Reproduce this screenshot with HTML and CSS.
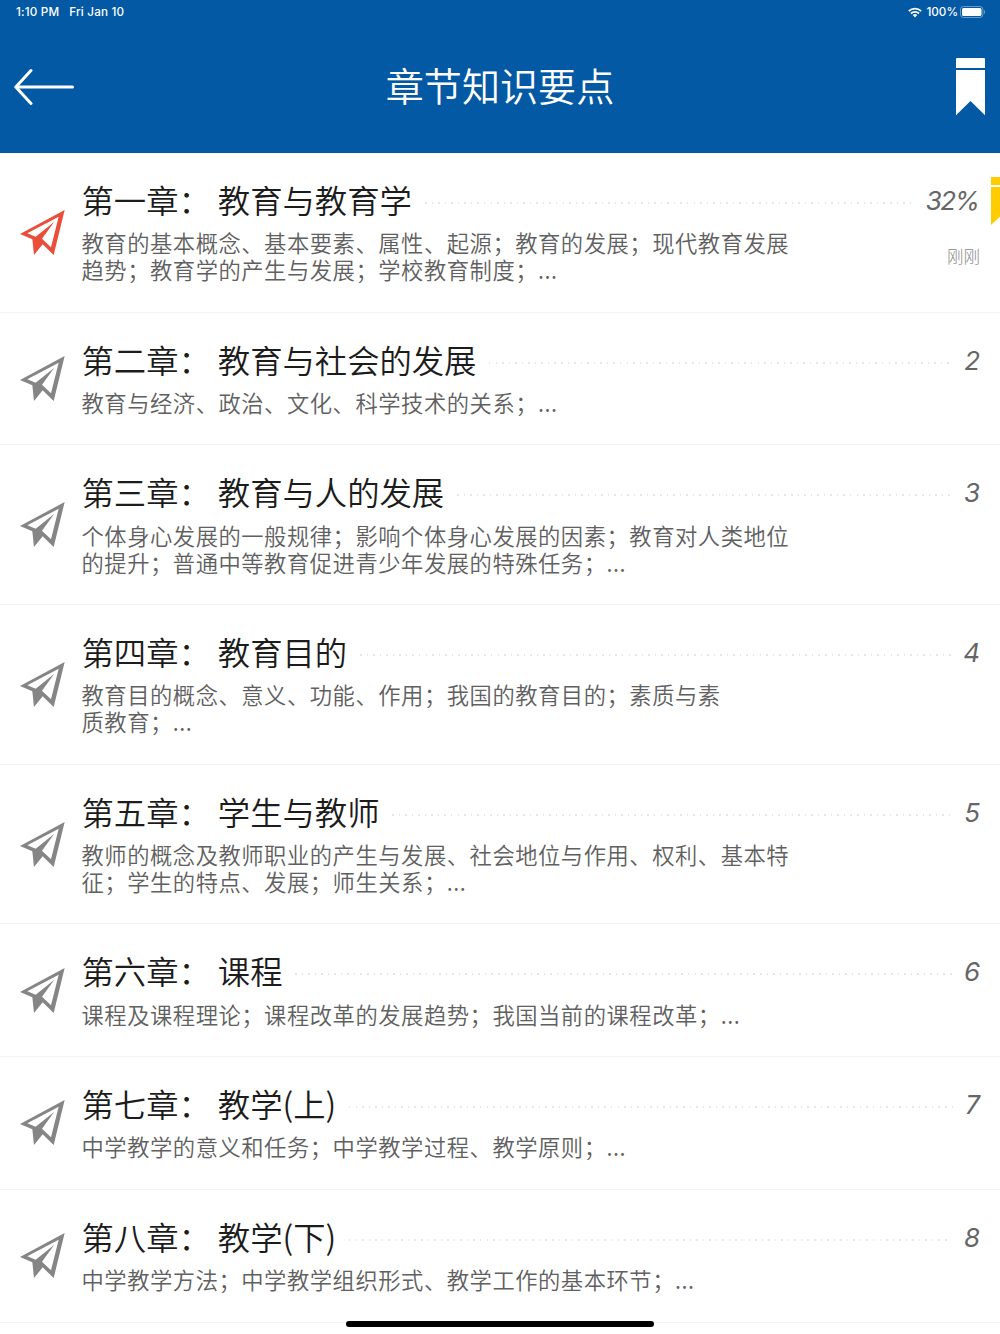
FILE: index.html
```html
<!DOCTYPE html>
<html lang="zh-CN">
<head>
  <meta charset="UTF-8">
  <title>章节知识要点</title>
  <link rel="stylesheet" href="styles.css">
</head>
<body>
  <svg class="defs" width="0" height="0">
    <symbol id="plane" viewBox="0 0 135 135">
      <path fill-rule="evenodd" d="M134 0 L101 135 L68 103 L42 135 L37 88 L0 72 Z M116 20 L22 70 L47 80 L103 35 L66 86 L93 112 Z"/>
    </symbol>
  </svg>

  <header class="header">
    <div class="status">
      <span class="time">1:10 PM</span>
      <span class="date">Fri Jan 10</span>
      <svg class="wifi" width="14" height="11" viewBox="0 0 14 11">
        <g fill="none" stroke="#fff" stroke-width="1.8">
          <path d="M0.8 4.1 A8.8 8.8 0 0 1 13.2 4.1"/>
          <path d="M3 6.5 A5.7 5.7 0 0 1 11 6.5"/>
        </g>
        <path fill="#fff" d="M4.7 8 A3.3 3.3 0 0 1 9.3 8 L7 10.4 Z"/>
      </svg>
      <span class="percent">100%</span>
      <svg class="battery" width="25" height="12" viewBox="0 0 25 12">
        <rect x="0.5" y="0.5" width="22.4" height="11" rx="3" fill="none" stroke="#fff" stroke-opacity="0.4"/>
        <rect x="2" y="2" width="19.5" height="8" rx="1.6" fill="#fff"/>
        <path d="M24 4 a2.2 2.2 0 0 1 0 4 Z" fill="#fff" fill-opacity="0.4"/>
      </svg>
    </div>
    <div class="navbar">
      <svg class="back" width="60" height="38" viewBox="0 0 60 38">
        <path d="M17 2.5 L1.8 19 L17 35.5 M1.8 19 H58.5" fill="none" stroke="#fff" stroke-width="3" stroke-linecap="round" stroke-linejoin="round"/>
      </svg>
      <h1 class="title">章节知识要点</h1>
      <svg class="bookmark" width="29" height="58" viewBox="0 0 29 58">
        <path fill="#fff" d="M0 1 Q0 0 1 0 H28 Q29 0 29 1 V10 H0 Z M0 12 H29 V57.2 L14.5 43 L0 57.2 Z"/>
      </svg>
    </div>
  </header>

  <main class="chapters">
    <section class="chapter current">
      <svg class="plane"><use href="#plane"/></svg>
      <div class="info">
        <div class="heading"><h2 class="name"><span class="no">第一章：</span>教育与教育学</h2><i class="dots"></i><span class="num">32%</span></div>
        <p class="desc">教育的基本概念、基本要素、属性、起源；教育的发展；现代教育发展<br>趋势；教育学的产生与发展；学校教育制度；...</p>
      </div>
      <span class="ago">刚刚</span>
      <svg class="mark" width="9" height="48" viewBox="0 0 9 48">
        <path fill="#fc0" d="M0 0 H9 V8 H0 Z M0 10 H9 V39.5 L0 48 Z"/>
      </svg>
    </section>
    <section class="chapter">
      <svg class="plane"><use href="#plane"/></svg>
      <div class="info">
        <div class="heading"><h2 class="name"><span class="no">第二章：</span>教育与社会的发展</h2><i class="dots"></i><span class="num">2</span></div>
        <p class="desc">教育与经济、政治、文化、科学技术的关系；...</p>
      </div>
    </section>
    <section class="chapter">
      <svg class="plane"><use href="#plane"/></svg>
      <div class="info">
        <div class="heading"><h2 class="name"><span class="no">第三章：</span>教育与人的发展</h2><i class="dots"></i><span class="num">3</span></div>
        <p class="desc">个体身心发展的一般规律；影响个体身心发展的因素；教育对人类地位<br>的提升；普通中等教育促进青少年发展的特殊任务；...</p>
      </div>
    </section>
    <section class="chapter">
      <svg class="plane"><use href="#plane"/></svg>
      <div class="info">
        <div class="heading"><h2 class="name"><span class="no">第四章：</span>教育目的</h2><i class="dots"></i><span class="num">4</span></div>
        <p class="desc">教育目的概念、意义、功能、作用；我国的教育目的；素质与素<br>质教育；...</p>
      </div>
    </section>
    <section class="chapter">
      <svg class="plane"><use href="#plane"/></svg>
      <div class="info">
        <div class="heading"><h2 class="name"><span class="no">第五章：</span>学生与教师</h2><i class="dots"></i><span class="num">5</span></div>
        <p class="desc">教师的概念及教师职业的产生与发展、社会地位与作用、权利、基本特<br>征；学生的特点、发展；师生关系；...</p>
      </div>
    </section>
    <section class="chapter">
      <svg class="plane"><use href="#plane"/></svg>
      <div class="info">
        <div class="heading"><h2 class="name"><span class="no">第六章：</span>课程</h2><i class="dots"></i><span class="num">6</span></div>
        <p class="desc">课程及课程理论；课程改革的发展趋势；我国当前的课程改革；...</p>
      </div>
    </section>
    <section class="chapter">
      <svg class="plane"><use href="#plane"/></svg>
      <div class="info">
        <div class="heading"><h2 class="name"><span class="no">第七章：</span>教学(上)</h2><i class="dots"></i><span class="num">7</span></div>
        <p class="desc">中学教学的意义和任务；中学教学过程、教学原则；...</p>
      </div>
    </section>
    <section class="chapter">
      <svg class="plane"><use href="#plane"/></svg>
      <div class="info">
        <div class="heading"><h2 class="name"><span class="no">第八章：</span>教学(下)</h2><i class="dots"></i><span class="num">8</span></div>
        <p class="desc">中学教学方法；中学教学组织形式、教学工作的基本环节；...</p>
      </div>
    </section>
  </main>

  <div class="home-bar"></div>
</body>
</html>
```
FILE: styles.css
```css
* {
  box-sizing: border-box;
}
body {
  margin: 0;
  height: 1334px;
  overflow: hidden;
  background: #fff;
  font-family: Inter, "Noto Sans CJK SC", sans-serif;
}
h1, h2, p {
  margin: 0;
  font-weight: 350;
}
.defs {
  position: absolute;
}

/* header */
.header {
  height: 153px;
  background: #0359a3;
  color: #fff;
}
.status {
  display: flex;
  align-items: center;
  height: 24px;
  padding: 0 15px 0 16px;
  font-size: 11.7px;
  font-weight: 500;
}
.time, .date {
  letter-spacing: 0.17px;
}
.date {
  margin-left: 10px;
}
.wifi {
  margin-left: auto;
}
.percent {
  margin: 0 2px 0 4px;
}
.navbar {
  display: flex;
  align-items: center;
  justify-content: space-between;
  height: 125.4px;
  padding: 0 15px 0 14px;
}
.title {
  margin: -4px 0 0 -30px;
  font-family: "Noto Sans CJK SC", sans-serif;
  font-size: 38.1px;
}

/* chapter list */
.chapter {
  position: relative;
  display: flex;
  align-items: center;
  padding: 27.5px 20px 28.5px;
  border-bottom: 1px solid #f3f3f3;
}
.plane {
  flex: none;
  width: 45px;
  height: 45px;
  margin: 1px 16.5px 0 0;
  fill: #858585;
}
.current .plane {
  fill: #e94e3b;
}
.info {
  flex: 1;
}
.heading {
  display: flex;
  align-items: center;
  height: 40px;
}
.name {
  margin-top: -3px;
  font-family: "Noto Sans CJK SC", sans-serif;
  font-size: 32.35px;
  line-height: 40px;
  color: #1c1c1c;
  white-space: nowrap;
}
.no {
  margin-right: 7px;
}
.dots {
  flex: 1;
  height: 2px;
  margin: 5px 12px 0 13px;
  background: repeating-linear-gradient(90deg, #e6e6e6 0 1.5px, transparent 1.5px 6.55px);
}
.num {
  font-size: 26px;
  font-style: italic;
  letter-spacing: -1.6px;
  margin-right: 1.6px;
  color: #666;
}
.desc {
  padding-top: 8.7px;
  font-family: "Noto Sans CJK SC", sans-serif;
  font-size: 22.3px;
  letter-spacing: 0.53px;
  line-height: 27px;
  color: #606060;
  white-space: nowrap;
}
.ago {
  position: absolute;
  right: 20px;
  top: 91px;
  font-family: "Noto Sans CJK SC", sans-serif;
  font-size: 16.5px;
  font-weight: 300;
  color: #888;
}
.mark {
  position: absolute;
  right: 0;
  top: 24px;
}

/* home indicator */
.home-bar {
  position: absolute;
  left: 346px;
  bottom: 7.5px;
  width: 308px;
  height: 5.5px;
  border-radius: 3px;
  background: #000;
}
```
